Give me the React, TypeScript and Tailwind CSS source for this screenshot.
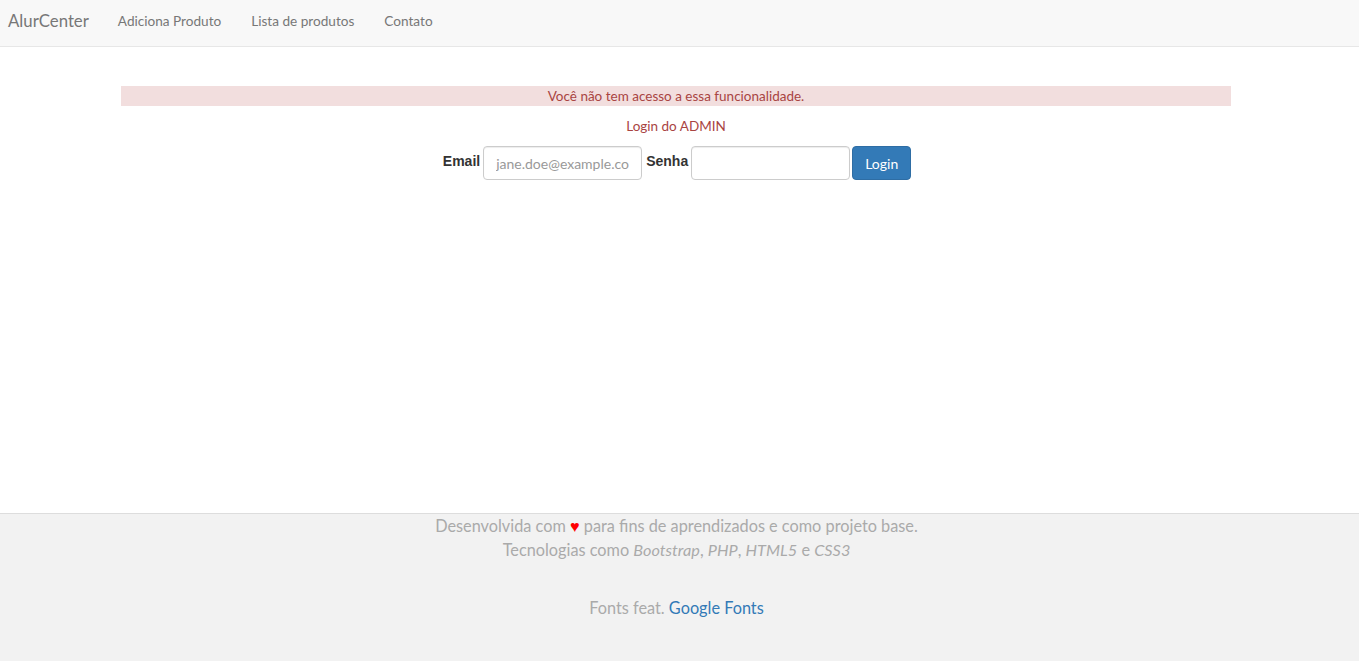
import React from 'react';

const font = "font-['Source_Sans_Pro','Lato','Open_Sans',sans-serif]";

const NavBar: React.FC = () => (
  <nav className="h-[47px] bg-[#f8f8f8] border-b border-[#e7e7e7] flex items-center pb-[4px]">
    <span className="pl-[8px] pr-[29px] text-[16.8px] text-[#777]">AlurCenter</span>
    <ul className="flex items-center text-[13.6px] text-[#777]">
      {['Adiciona Produto', 'Lista de produtos', 'Contato'].map((item) => (
        <li key={item} className="px-[15px] first:pl-0">
          {item}
        </li>
      ))}
    </ul>
  </nav>
);

const LoginForm: React.FC = () => (
  <div className="flex items-start justify-center mt-[10px] pl-[2px]">
    <label className="font-['Liberation_Sans',Arial,sans-serif] font-bold text-[14px] text-[#333] mt-[5px] mr-[3px]">
      Email
    </label>
    <input
      className="w-[159px] h-[34px] border border-[#ccc] rounded-[4px] px-[12px] text-[14px] text-[#555] placeholder:text-[#999] shadow-[inset_0_1px_1px_rgba(0,0,0,0.075)] outline-none"
      placeholder="jane.doe@example.com"
    />
    <label className="font-['Liberation_Sans',Arial,sans-serif] font-bold text-[14px] text-[#333] mt-[5px] ml-[4px] mr-[3px]">
      Senha
    </label>
    <input
      type="password"
      className="w-[159px] h-[34px] border border-[#ccc] rounded-[4px] px-[12px] text-[14px] shadow-[inset_0_1px_1px_rgba(0,0,0,0.075)] outline-none"
    />
    <button className="ml-[2px] w-[59px] h-[34px] bg-[#337ab7] border border-[#2e6da4] rounded-[4px] text-white text-[14px]">
      Login
    </button>
  </div>
);

const Footer: React.FC = () => (
  <footer className="h-[148px] bg-[#f2f2f2] border-t border-[#ddd] text-center text-[16.3px] text-[#aaa] leading-[24px] pr-[6px]">
    <p>
      Desenvolvida com <span className="text-[#f00]">♥</span> para fins de aprendizados e como projeto base.
    </p>
    <p>
      Tecnologias como <em>Bootstrap</em>, <em>PHP</em>, <em>HTML5</em> e <em>CSS3</em>
    </p>
    <p className="mt-[34px]">
      Fonts feat. <span className="text-[#337ab7]">Google Fonts</span>
    </p>
  </footer>
);

const App: React.FC = () => (
  <div className={`${font} w-[1359px] h-[661px] flex flex-col bg-white`}>
    <NavBar />
    <main className="flex-1 pt-[39px]">
      <div className="ml-[121px] w-[1110px]">
        <div className="h-[20px] bg-[#f2dede] text-[#a94442] text-[13.5px] leading-[20px] text-center">
          Você não tem acesso a essa funcionalidade.
        </div>
        <p className="mt-[10px] text-center text-[#a94442] text-[13.5px] leading-[20px]">Login do ADMIN</p>
        <LoginForm />
      </div>
    </main>
    <Footer />
  </div>
);

export default App;
